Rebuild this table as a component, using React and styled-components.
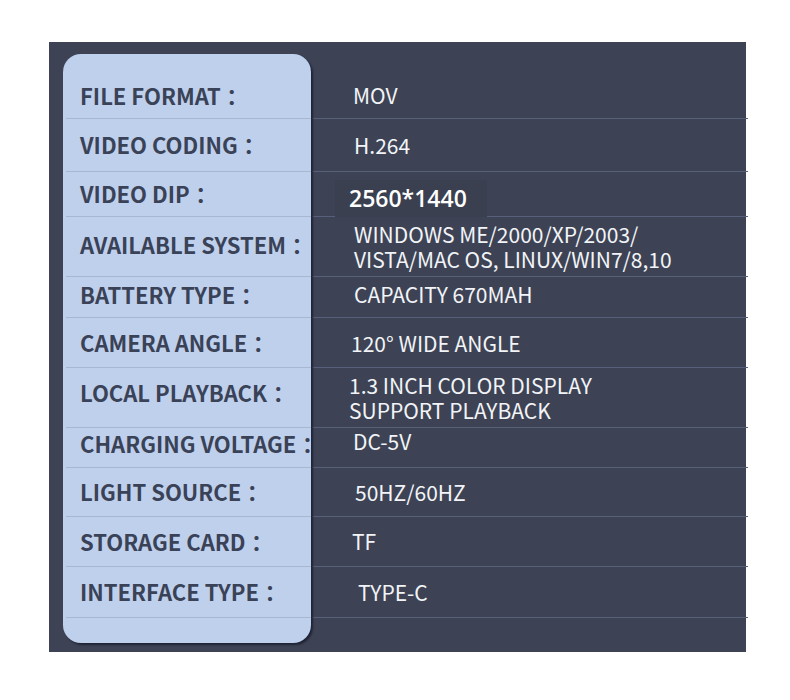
import React from "react";
import styled, { createGlobalStyle } from "styled-components";

const GlobalStyle = createGlobalStyle`
  body {
    margin: 0;
    background: #ffffff;
  }
`;

const Page = styled.div`
  width: 790px;
  height: 700px;
  padding: 42px 0 0 49px;
  box-sizing: border-box;
`;

const Panel = styled.div`
  width: 697px;
  height: 610px;
  background: #3d4354;
  display: flex;
  padding: 12px 0 0 14px;
  box-sizing: border-box;
`;

const Card = styled.div`
  width: 248px;
  height: 589px;
  flex-shrink: 0;
  background: #bfd0ec;
  border-radius: 18px;
  box-shadow: 2px 2px 2px #1f2536;
  padding-top: 20px;
  box-sizing: border-box;
  position: relative;
  z-index: 1;
`;

const Values = styled.div`
  width: 437px;
  flex-shrink: 0;
  padding-top: 20px;
`;

// s shifts the text down (positive) or up (negative) inside its row
const shift = (s = 0) => `
  padding-top: ${Math.max(0, 2 * s)}px;
  padding-bottom: ${Math.max(0, -2 * s)}px;
`;

const LabelCell = styled.div`
  height: ${(p) => p.h + 1}px;
  box-sizing: border-box;
  margin-left: 3px;
  border-bottom: 1px solid #a8b7d1;
  display: flex;
  align-items: center;
  padding-left: 14px;
  ${(p) => shift(p.s)}
  font-family: "Noto Sans CJK TC", "Noto Sans CJK SC", sans-serif;
  font-weight: 700;
  font-size: 22px;
  color: #3a4257;
  white-space: nowrap;
`;

const ValueCell = styled.div`
  height: ${(p) => p.h + 1}px;
  box-sizing: border-box;
  border-bottom: 1px solid #56607a;
  display: flex;
  flex-direction: column;
  justify-content: center;
  padding-left: ${(p) => p.x}px;
  ${(p) => shift(p.s)}
  font-family: "Noto Sans CJK SC", sans-serif;
  font-size: 21px;
  line-height: 25px;
  color: #f2f4f8;
  white-space: nowrap;
`;

const BigValue = styled.span`
  align-self: flex-start;
  margin-left: -14px;
  padding: 4px 20px 4px 14px;
  background: #3a4050;
  font-family: "Open Sans", "Noto Sans", sans-serif;
  font-weight: 600;
  font-size: 23px;
  line-height: 29px;
  color: #ffffff;
`;

const rows = [
  { label: "FILE FORMAT", value: ["MOV"], h: 44, x: 42, ls: -1, vs: -1 },
  { label: "VIDEO CODING", value: ["H.264"], h: 52, x: 43, ls: -1, vs: 0 },
  { label: "VIDEO DIP", value: ["2560*1440"], h: 44, x: 38, ls: -1, vs: 4, big: true },
  { label: "AVAILABLE SYSTEM", value: ["WINDOWS ME/2000/XP/2003/", "VISTA/MAC OS, LINUX/WIN7/8,10"], h: 59, x: 43, ls: -3, vs: 0 },
  { label: "BATTERY TYPE", value: ["CAPACITY 670MAH"], h: 40, x: 43, ls: -3, vs: -3 },
  { label: "CAMERA ANGLE", value: ["120° WIDE ANGLE"], h: 49, x: 40, ls: -1, vs: 1 },
  { label: "LOCAL PLAYBACK", value: ["1.3 INCH COLOR DISPLAY", "SUPPORT PLAYBACK"], h: 59, x: 38, ls: -6, vs: 0 },
  { label: "CHARGING VOLTAGE", value: ["DC-5V"], h: 39, x: 42, ls: -5, vs: -6 },
  { label: "LIGHT SOURCE", value: ["50HZ/60HZ"], h: 48, x: 44, ls: -1, vs: 0 },
  { label: "STORAGE CARD", value: ["TF"], h: 49, x: 41, ls: -1, vs: 0 },
  { label: "INTERFACE TYPE", value: ["TYPE-C"], h: 50, x: 47, ls: -1, vs: 0 },
];

function App() {
  return (
    <Page>
      <GlobalStyle />
      <Panel>
        <Card>
          {rows.map((r) => (
            <LabelCell key={r.label} h={r.h} s={r.ls}>
              {r.label}：
            </LabelCell>
          ))}
        </Card>
        <Values>
          {rows.map((r) => (
            <ValueCell key={r.label} h={r.h} x={r.x} s={r.vs}>
              {r.value.map((line) =>
                r.big ? <BigValue key={line}>{line}</BigValue> : <span key={line}>{line}</span>
              )}
            </ValueCell>
          ))}
        </Values>
      </Panel>
    </Page>
  );
}

export default App;
